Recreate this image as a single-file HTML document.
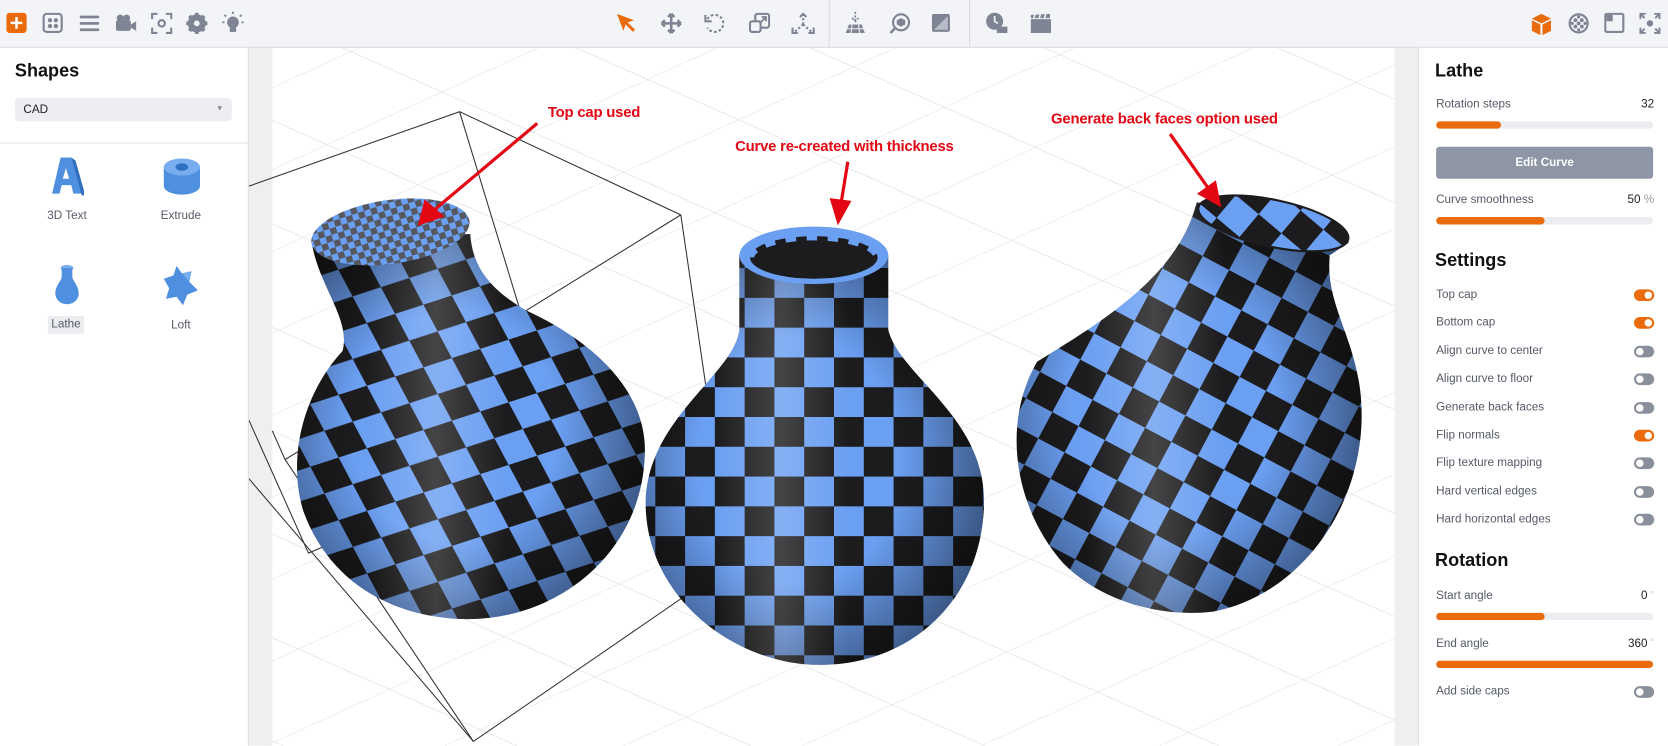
<!DOCTYPE html>
<html><head><meta charset="utf-8"><style>
html,body{margin:0;padding:0;width:1668px;height:746px;overflow:hidden;background:#fff;font-family:"Liberation Sans",sans-serif;}
#w{position:absolute;left:0;top:0;width:1568px;height:701px;transform:scale(1.06378);transform-origin:0 0;}
.tb{position:absolute;left:0;top:0;width:1568px;height:44px;background:#f3f4f7;border-bottom:1px solid #d9dbe0;}
.ic{position:absolute;top:11px;}
.lp{position:absolute;left:0;top:45px;width:233px;height:656px;background:#fff;border-right:1px solid #dcdde2;}
.rp{position:absolute;left:1333px;top:45px;width:235px;height:656px;background:#fff;border-left:1px solid #dcdde2;}
h2{margin:0;position:absolute;font-size:17px;font-weight:bold;color:#111;}
.lbl{position:absolute;font-size:11px;color:#555a66;}
.val{position:absolute;font-size:11px;color:#222;right:14px;}
.bar{position:absolute;left:16px;width:204px;height:7px;border-radius:4px;background:#ecedf1;overflow:hidden;}
.bar i{display:block;height:7px;background:#ea6b0b;border-radius:4px;}
.tg{position:absolute;right:14px;width:19px;height:11px;border-radius:6px;background:#8a8f9c;}
.tg::after{content:"";position:absolute;left:2px;top:2px;width:7px;height:7px;border-radius:50%;background:#fff;}
.tg.on{background:#ea6b0b}.tg.on::after{left:10px}
.ann{position:absolute;font-size:14px;font-weight:bold;color:#e30613;text-shadow:0 0 2px #fff,1px 1px 1px #fff;letter-spacing:-0.2px}
</style></head><body><div id="w">
<div class="tb">
 <svg class="ic" style="left:6px;top:12px" width="20" height="20"><rect width="19" height="19" rx="3" fill="#ea6b0b"/><path d="M9.5 4v11M4 9.5h11" stroke="#fff" stroke-width="2.4"/></svg>
 <svg class="ic" style="left:40px;top:12px" width="20" height="20"><rect x="1" y="1" width="17" height="17" rx="3" fill="none" stroke="#7e8494" stroke-width="2"/><circle cx="7" cy="7" r="2" fill="#7e8494"/><circle cx="12.5" cy="7" r="2" fill="#7e8494"/><circle cx="7" cy="12.5" r="2" fill="#7e8494"/><circle cx="12.5" cy="12.5" r="2" fill="#7e8494"/></svg>
 <svg class="ic" style="left:75px;top:13px" width="20" height="18"><path d="M1 3h16M1 9h16M1 15h16" stroke="#7e8494" stroke-width="2.6" stroke-linecap="round"/></svg>
 <svg class="ic" style="left:108px;top:12px" width="22" height="20"><circle cx="5" cy="5" r="3.3" fill="#7e8494"/><circle cx="11" cy="5" r="3.3" fill="#7e8494"/><rect x="1" y="7" width="14" height="10" rx="2" fill="#7e8494"/><path d="M15 11l5-3v9l-5-3z" fill="#7e8494"/></svg>
 <svg class="ic" style="left:142px;top:12px" width="20" height="20"><path d="M1 6V1h5M14 1h5v5M19 14v5h-5M6 19H1v-5" fill="none" stroke="#7e8494" stroke-width="2"/><circle cx="10" cy="10" r="3" fill="none" stroke="#7e8494" stroke-width="2"/></svg>
 <svg class="ic" style="left:175px;top:12px" width="20" height="20"><circle cx="10" cy="10" r="6.5" fill="none" stroke="#7e8494" stroke-width="4"/><path d="M10 0v20M0 10h20M3 3l14 14M17 3L3 17" stroke="#7e8494" stroke-width="3.5"/><circle cx="10" cy="10" r="2.7" fill="#f3f4f7"/></svg>
 <svg class="ic" style="left:208px;top:10px" width="22" height="24"><circle cx="11" cy="11" r="5.5" fill="#7e8494"/><rect x="8" y="16" width="6" height="4" fill="#7e8494"/><path d="M11 1v2M3 4l1.5 1.5M19 4l-1.5 1.5M1 11h2M19 11h2" stroke="#7e8494" stroke-width="1.8"/></svg>
 <svg class="ic" style="left:579px;top:12px" width="20" height="20"><path d="M1 1l16 6-6 2 7 7-2 2-7-7-2 6z" fill="#ea6b0b"/></svg>
 <svg class="ic" style="left:621px;top:12px" width="20" height="20"><path d="M10 1v18M1 10h18M10 1l-3 3M10 1l3 3M10 19l-3-3M10 19l3-3M1 10l3-3M1 10l3 3M19 10l-3-3M19 10l-3 3" stroke="#7e8494" stroke-width="2.4" fill="none"/></svg>
 <svg class="ic" style="left:662px;top:12px" width="20" height="20"><path d="M3 6A8 8 0 1 1 3 14" fill="none" stroke="#7e8494" stroke-width="2" stroke-dasharray="2.5 2"/><path d="M1 2v6h6" fill="none" stroke="#7e8494" stroke-width="2"/></svg>
 <svg class="ic" style="left:704px;top:12px" width="20" height="20"><rect x="6" y="1" width="13" height="13" rx="2" fill="none" stroke="#7e8494" stroke-width="2"/><rect x="1" y="8" width="10" height="10" rx="2" fill="#f3f4f7" stroke="#7e8494" stroke-width="2"/><path d="M10 10l6-6M12 4h4v4" stroke="#7e8494" stroke-width="1.8" fill="none"/></svg>
 <svg class="ic" style="left:744px;top:12px" width="22" height="20"><path d="M11 1v10M11 11l-8 7M11 11l8 7" stroke="#7e8494" stroke-width="2" stroke-dasharray="2 2"/><path d="M8 4l3-3 3 3M1 14v5h5M21 14v5h-5" fill="none" stroke="#7e8494" stroke-width="2"/></svg>
 <div style="position:absolute;left:779px;top:0;width:1px;height:44px;background:#d6d8de"></div>
 <svg class="ic" style="left:793px;top:11px" width="22" height="22"><path d="M11 0v9M8 6l3 3 3-3" stroke="#7e8494" stroke-width="1.6" fill="none" stroke-dasharray="2 1.4"/><path d="M5 12h12l3 8H2z" fill="#7e8494"/><path d="M3 16h16M8 12l-1 8M14 12l1 8" stroke="#f3f4f7" stroke-width="1"/></svg>
 <svg class="ic" style="left:836px;top:12px" width="20" height="20"><circle cx="11" cy="9" r="7.5" fill="none" stroke="#7e8494" stroke-width="2"/><path d="M6 14l-5 5" stroke="#7e8494" stroke-width="2.4"/><path d="M11 5l4 2v4l-4 2-4-2V7z" fill="#7e8494"/></svg>
 <svg class="ic" style="left:876px;top:13px" width="18" height="18"><rect width="17" height="17" rx="2" fill="#7e8494"/><path d="M2 15L15 2V15z" fill="#b8bcc6"/></svg>
 <div style="position:absolute;left:911px;top:0;width:1px;height:44px;background:#d6d8de"></div>
 <svg class="ic" style="left:926px;top:11px" width="22" height="22"><circle cx="9" cy="9" r="8" fill="#7e8494"/><path d="M9 4v5l3 2" stroke="#f3f4f7" stroke-width="1.6" fill="none"/><rect x="11" y="14" width="10" height="6" fill="#7e8494"/></svg>
 <svg class="ic" style="left:968px;top:12px" width="22" height="20"><rect x="1" y="6" width="19" height="13" fill="#7e8494"/><path d="M1 2l18-1v4H1z" fill="#7e8494"/><path d="M5 1l-1 4M10 1l-1 4M15 1l-1 4" stroke="#f3f4f7" stroke-width="1.5"/></svg>
 <svg class="ic" style="left:1439px;top:12px" width="20" height="22"><path d="M10 1l9 4.5-9 4.5-9-4.5z" fill="#ea6b0b"/><path d="M1 7l8 4v10l-8-4zM19 7l-8 4v10l8-4z" fill="#ea6b0b"/></svg>
 <svg class="ic" style="left:1474px;top:12px" width="20" height="20"><circle cx="10" cy="10" r="8.5" fill="none" stroke="#7e8494" stroke-width="2"/><g fill="#7e8494"><circle cx="7" cy="7" r="1.8"/><circle cx="13" cy="7" r="1.8"/><circle cx="7" cy="13" r="1.8"/><circle cx="13" cy="13" r="1.8"/><circle cx="10" cy="10" r="1.8"/><circle cx="10" cy="4" r="1.5"/><circle cx="10" cy="16" r="1.5"/><circle cx="4" cy="10" r="1.5"/><circle cx="16" cy="10" r="1.5"/></g></svg>
 <svg class="ic" style="left:1508px;top:12px" width="20" height="20"><rect x="1" y="1" width="17" height="17" rx="1.5" fill="none" stroke="#7e8494" stroke-width="2"/><path d="M2 2h6v6H2z" fill="#7e8494"/></svg>
 <svg class="ic" style="left:1541px;top:12px" width="20" height="20"><path d="M1 6V1h5M1 1l4 4M19 6V1h-5M19 1l-4 4M1 14v5h5M1 19l4-4M19 14v5h-5M19 19l-4-4" fill="none" stroke="#7e8494" stroke-width="1.8"/><circle cx="10" cy="10" r="3" fill="#7e8494"/></svg>
</div>

<svg style="position:absolute;left:234px;top:45px" width="1099" height="656" viewBox="234 45 1099 656">
<defs>
 <pattern id="grid" width="90" height="90" patternUnits="userSpaceOnUse" patternTransform="matrix(0.95,0.42,-1.2,0.55,780,150)">
  <path d="M0 0H90M0 0V90" stroke="#e0e0e0" stroke-width="1.2" fill="none"/>
 </pattern>
 <pattern id="ck1" width="56" height="56" patternUnits="userSpaceOnUse" patternTransform="rotate(-18 440 420) skewX(10)">
  <rect width="56" height="56" fill="#6b9ff2"/><rect width="28" height="28" fill="#1c1c1e"/><rect x="28" y="28" width="28" height="28" fill="#1c1c1e"/></pattern>
 <pattern id="ck2" width="56" height="56" patternUnits="userSpaceOnUse">
  <rect width="56" height="56" fill="#6b9ff2"/><rect width="28" height="28" fill="#1c1c1e"/><rect x="28" y="28" width="28" height="28" fill="#1c1c1e"/></pattern>
 <pattern id="ck3" width="56" height="56" patternUnits="userSpaceOnUse" patternTransform="rotate(28 1120 380)">
  <rect width="56" height="56" fill="#6b9ff2"/><rect width="28" height="28" fill="#1c1c1e"/><rect x="28" y="28" width="28" height="28" fill="#1c1c1e"/></pattern>
 <pattern id="ckc" width="12" height="12" patternUnits="userSpaceOnUse" patternTransform="rotate(-10)">
  <rect width="12" height="12" fill="#6b9ff2"/><rect width="6" height="6" fill="#55585e"/><rect x="6" y="6" width="6" height="6" fill="#55585e"/></pattern>
 <radialGradient id="sh" cx="0.45" cy="0.5" r="0.6"><stop offset="0.5" stop-color="#000" stop-opacity="0"/><stop offset="1" stop-color="#000" stop-opacity="0.5"/></radialGradient>
 <linearGradient id="hl" x1="0" y1="0" x2="1" y2="0"><stop offset="0.2" stop-color="#fff" stop-opacity="0"/><stop offset="0.4" stop-color="#fff" stop-opacity="0.18"/><stop offset="0.6" stop-color="#fff" stop-opacity="0"/></linearGradient>
</defs>
<rect x="234" y="45" width="1099" height="656" fill="#fff"/>
<rect x="234" y="45" width="1099" height="656" fill="url(#grid)"/>
<rect x="234" y="45" width="22" height="656" fill="#efefef"/>
<rect x="1311" y="45" width="22" height="656" fill="#efefef"/>
<g stroke="#333" stroke-width="1" fill="none">
 <path d="M234 175L432 105L640 202L688 530L445 697L234 450"/>
 <path d="M432 105L528 420M640 202L268 432L256 405M268 432L445 697M234 395L290 520L520 420"/>
</g>
<path id="v1" d="M293 228C300 270 330 300 322 330C285 370 270 430 285 480C312 555 380 582 440 582C525 582 602 520 606 430C610 370 560 322 495 292C460 272 444 250 442 220Z" fill="url(#ck1)"/>
<path d="M293 228C300 270 330 300 322 330C285 370 270 430 285 480C312 555 380 582 440 582C525 582 602 520 606 430C610 370 560 322 495 292C460 272 444 250 442 220Z" fill="url(#sh)"/>
<path d="M293 228C300 270 330 300 322 330C285 370 270 430 285 480C312 555 380 582 440 582C525 582 602 520 606 430C610 370 560 322 495 292C460 272 444 250 442 220Z" fill="url(#hl)"/>
<ellipse cx="367" cy="218" rx="75" ry="30" transform="rotate(-8 367 218)" fill="url(#ckc)"/>
<path d="M695 240L695 310C690 352 610 392 607 470C605 560 690 625 770 625C860 625 925 560 925 470C925 392 845 352 835 310L835 240Z" fill="url(#ck2)"/>
<path d="M695 240L695 310C690 352 610 392 607 470C605 560 690 625 770 625C860 625 925 560 925 470C925 392 845 352 835 310L835 240Z" fill="url(#sh)"/>
<path d="M695 240L695 310C690 352 610 392 607 470C605 560 690 625 770 625C860 625 925 560 925 470C925 392 845 352 835 310L835 240Z" fill="url(#hl)"/>
<ellipse cx="765" cy="240" rx="70" ry="27" fill="#6b9ff2"/>
<ellipse cx="765" cy="242" rx="60" ry="20" fill="#1c1c1e"/>
<path d="M705 242A60 20 0 0 1 825 242" fill="none" stroke="#6b9ff2" stroke-width="8" stroke-dasharray="10 10"/>
<path d="M1125 190C1108 258 1040 300 975 340C940 400 955 480 1000 530C1040 570 1100 580 1140 575C1220 560 1280 480 1280 390C1280 322 1245 290 1250 240L1268 228Z" fill="url(#ck3)"/>
<path d="M1125 190C1108 258 1040 300 975 340C940 400 955 480 1000 530C1040 570 1100 580 1140 575C1220 560 1280 480 1280 390C1280 322 1245 290 1250 240L1268 228Z" fill="url(#sh)"/>
<path d="M1125 190C1108 258 1040 300 975 340C940 400 955 480 1000 530C1040 570 1100 580 1140 575C1220 560 1280 480 1280 390C1280 322 1245 290 1250 240L1268 228Z" fill="url(#hl)"/>
<ellipse cx="1197" cy="210" rx="72" ry="22" transform="rotate(12 1197 210)" fill="url(#ck3)"/>
<ellipse cx="1197" cy="210" rx="72" ry="22" transform="rotate(12 1197 210)" fill="none" stroke="#1c1c1e" stroke-width="2"/>
<g stroke="#e30613" stroke-width="3" fill="#e30613">
 <path d="M505 116L405 200"/><path d="M395 210L400 190L415 203Z"/>
 <path d="M797 152L790 195"/><path d="M788 208L782 188L798 190Z"/>
 <path d="M1100 126L1138 180"/><path d="M1146 192L1128 182L1142 172Z"/>
</g>
</svg>
<div class="ann" style="left:515px;top:97px">Top cap used</div>
<div class="ann" style="left:691px;top:129px">Curve re-created with thickness</div>
<div class="ann" style="left:988px;top:103px">Generate back faces option used</div>

<div class="lp">
 <h2 style="left:14px;top:12px">Shapes</h2>
 <div style="position:absolute;left:14px;top:47px;width:204px;height:22px;background:#edeef2;border-radius:4px;font-size:11px;color:#222;line-height:22px;text-indent:8px">CAD<span style="position:absolute;right:8px;top:0;font-size:7px;color:#888">▼</span></div>
 <div style="position:absolute;left:0;top:89px;width:233px;height:1px;background:#e3e4e8"></div>
 <svg style="position:absolute;left:47px;top:101px" width="32" height="40"><path d="M10 2h10l10 34h-8l-2-8h-9l-2 8H2z" fill="#4f8fe0"/><path d="M15 12l-3 10h6z" fill="#fff"/><path d="M20 2l4 3 9 32-3 1z" fill="#2f6fc0"/></svg>
 <svg style="position:absolute;left:152px;top:103px" width="38" height="36"><path d="M2 9v18a17 8 0 0 0 34 0V9z" fill="#4f8fe0"/><ellipse cx="19" cy="9" rx="17" ry="8" fill="#78aef0"/><ellipse cx="19" cy="9" rx="6" ry="3.5" fill="#2f6fc0"/></svg>
 <div class="lbl" style="left:33px;top:152px;width:60px;text-align:center">3D Text</div>
 <div class="lbl" style="left:140px;top:152px;width:60px;text-align:center">Extrude</div>
 <svg style="position:absolute;left:50px;top:203px" width="26" height="40"><ellipse cx="13" cy="4" rx="6" ry="3" fill="#78aef0"/><path d="M8 4v8C8 16 2 20 2 28a11 10 0 0 0 22 0c0-8-6-12-6-16V4z" fill="#4f8fe0"/></svg>
 <svg style="position:absolute;left:152px;top:203px" width="36" height="40"><path d="M14 2l5 7 9-2-2 10 8 8-10 4-4 10-6-8-10 2 3-10-5-9 9-3z" fill="#4f8fe0"/><path d="M19 9l9-2-2 10z" fill="#78aef0"/></svg>
 <div class="lbl" style="left:45px;top:252px;width:34px;height:17px;line-height:17px;background:#ecedf1;text-align:center;border-radius:2px">Lathe</div>
 <div class="lbl" style="left:140px;top:255px;width:60px;text-align:center">Loft</div>
</div>

<div class="rp">
 <h2 style="left:15px;top:12px">Lathe</h2>
 <div class="lbl" style="left:16px;top:47px">Rotation steps</div><div class="val" style="top:47px">32</div>
 <div class="bar" style="top:69px"><i style="width:61px"></i></div>
 <div style="position:absolute;left:16px;top:93px;width:204px;height:30px;background:#8e95a5;border-radius:3px;color:#fff;font-size:11px;font-weight:bold;text-align:center;line-height:30px">Edit Curve</div>
 <div class="lbl" style="left:16px;top:137px">Curve smoothness</div><div class="val" style="top:137px">50 <span style="color:#999">%</span></div>
 <div class="bar" style="top:159px"><i style="width:102px"></i></div>
 <h2 style="left:15px;top:190px">Settings</h2>
 <div class="lbl" style="left:16px;top:226px">Top cap</div><div class="tg on" style="top:227px"></div>
 <div class="lbl" style="left:16px;top:252px">Bottom cap</div><div class="tg on" style="top:253px"></div>
 <div class="lbl" style="left:16px;top:279px">Align curve to center</div><div class="tg" style="top:280px"></div>
 <div class="lbl" style="left:16px;top:305px">Align curve to floor</div><div class="tg" style="top:306px"></div>
 <div class="lbl" style="left:16px;top:332px">Generate back faces</div><div class="tg" style="top:333px"></div>
 <div class="lbl" style="left:16px;top:358px">Flip normals</div><div class="tg on" style="top:359px"></div>
 <div class="lbl" style="left:16px;top:384px">Flip texture mapping</div><div class="tg" style="top:385px"></div>
 <div class="lbl" style="left:16px;top:411px">Hard vertical edges</div><div class="tg" style="top:412px"></div>
 <div class="lbl" style="left:16px;top:437px">Hard horizontal edges</div><div class="tg" style="top:438px"></div>
 <h2 style="left:15px;top:472px">Rotation</h2>
 <div class="lbl" style="left:16px;top:509px">Start angle</div><div class="val" style="top:509px">0 <span style="color:#bbb;font-size:8px;vertical-align:top">°</span></div>
 <div class="bar" style="top:531px"><i style="width:102px"></i></div>
 <div class="lbl" style="left:16px;top:554px">End angle</div><div class="val" style="top:554px">360 <span style="color:#bbb;font-size:8px;vertical-align:top">°</span></div>
 <div class="bar" style="top:576px"><i style="width:204px"></i></div>
 <div class="lbl" style="left:16px;top:599px">Add side caps</div><div class="tg" style="top:600px"></div>
</div>
</div></body></html>
